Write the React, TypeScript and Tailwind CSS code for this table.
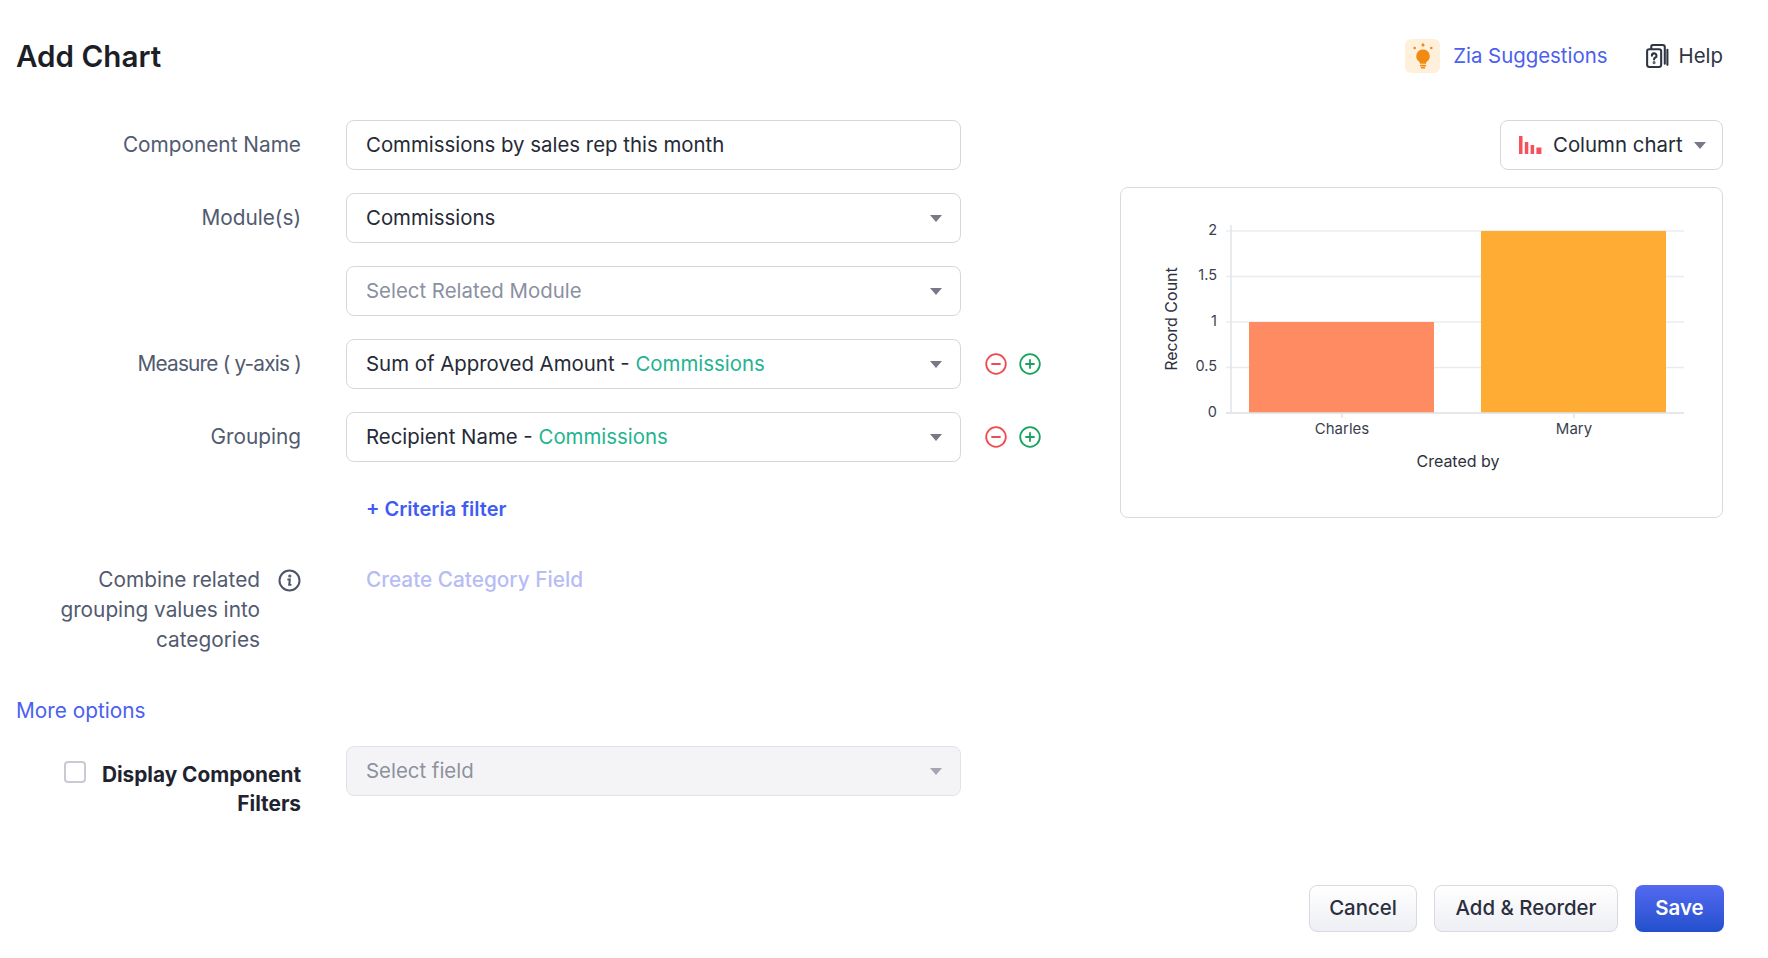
import React from "react";

const font = "font-['Inter','Noto_Sans',sans-serif]";
const labelCls = "w-[285px] shrink-0 text-right text-[20.8px] leading-[28px] text-[#525a70]";

function Caret({ color = "#777a86" }: { color?: string }) {
  return (
    <svg width="12" height="7" viewBox="0 0 12 7">
      <path d="M0 0h12L6 7z" fill={color} />
    </svg>
  );
}

function RoundAction({ kind }: { kind: "minus" | "plus" }) {
  const color = kind === "minus" ? "#f04b50" : "#17a45e";
  return (
    <svg width="22" height="22" viewBox="0 0 22 22" fill="none" stroke={color} strokeWidth="1.8" strokeLinecap="round">
      <circle cx="11" cy="11" r="9.8" />
      <path d="M7 11h8" />
      {kind === "plus" && <path d="M11 7v8" />}
    </svg>
  );
}

function Field({
  children,
  caret = true,
  disabled = false,
}: {
  children: React.ReactNode;
  caret?: boolean;
  disabled?: boolean;
}) {
  return (
    <div
      className={
        "ml-[45px] w-[615px] h-[50px] shrink-0 rounded-lg border flex items-center justify-between pl-[19px] pr-[18px] text-[20.4px] " +
        (disabled ? "bg-[#f4f4f7] border-[#e2e3ea]" : "bg-white border-[#d6d7de]")
      }
    >
      <span className="truncate">{children}</span>
      {caret && <Caret color={disabled ? "#a4a7b1" : "#777a86"} />}
    </div>
  );
}

function Row({ label, children }: { label?: React.ReactNode; children: React.ReactNode }) {
  return (
    <div className="flex items-center h-[50px]">
      <div className={labelCls}>{label}</div>
      {children}
    </div>
  );
}

function Actions() {
  return (
    <div className="flex items-center gap-[12px] ml-[24px]">
      <RoundAction kind="minus" />
      <RoundAction kind="plus" />
    </div>
  );
}

function ZiaIcon() {
  return (
    <div className="w-[35px] h-[34px] rounded-md bg-[#fff0dc] flex items-center justify-center">
      <svg width="24" height="26" viewBox="0 0 20 22">
        <circle cx="10" cy="1.6" r="1.3" fill="#f08a12" />
        <circle cx="3" cy="4.2" r="1.1" fill="#f08a12" />
        <circle cx="17" cy="4.2" r="1.1" fill="#f08a12" />
        <path d="M10 5.5a5.6 5.6 0 0 1 3.4 10.1c-.5.4-.8 1-.8 1.6v.3H7.4v-.3c0-.6-.3-1.2-.8-1.6A5.6 5.6 0 0 1 10 5.5z" fill="#f08a12" />
        <rect x="7.4" y="18.4" width="5.2" height="1.4" rx="0.5" fill="#f08a12" />
        <rect x="8.2" y="20.3" width="3.6" height="1.3" rx="0.5" fill="#f08a12" />
      </svg>
    </div>
  );
}

function HelpIcon() {
  return (
    <svg width="24" height="26" viewBox="0 0 23 25" fill="none" stroke="#303544" strokeWidth="2" strokeLinecap="round" strokeLinejoin="round">
      <path d="M6 5V3.5A1.5 1.5 0 0 1 7.5 2H17a2 2 0 0 1 2 2v16" />
      <path d="M21.5 6.5V21" />
      <rect x="2" y="6" width="13.5" height="17" rx="2" />
      <path d="M6.6 12.2a2.2 2.2 0 1 1 3 2c-.6.3-.9.7-.9 1.3v.4" />
      <circle cx="8.7" cy="19" r="0.4" fill="#303544" />
    </svg>
  );
}

function ColumnIcon() {
  return (
    <svg width="23" height="18" viewBox="0 0 23 18">
      <rect x="0" y="0" width="3.5" height="18" fill="#f4525b" />
      <rect x="5.8" y="6" width="3.5" height="12" fill="#f4525b" />
      <rect x="11.6" y="9" width="3.5" height="9" fill="#f4525b" />
      <rect x="17.4" y="11.5" width="5" height="6.5" fill="#f4525b" />
    </svg>
  );
}

function InfoIcon() {
  return (
    <svg width="23" height="23" viewBox="0 0 23 23" fill="none" stroke="#4c5468" strokeWidth="2" strokeLinecap="round">
      <circle cx="11.5" cy="11.5" r="10" />
      <circle cx="11.8" cy="7" r="0.6" fill="#4c5468" />
      <path d="M10.2 10.6h1.6l-.6 5.2h1.4" />
    </svg>
  );
}

function Chart() {
  const grid = [
    { v: "2", y: 43 },
    { v: "1.5", y: 88.5 },
    { v: "1", y: 134 },
    { v: "0.5", y: 179.5 },
    { v: "0", y: 225 },
  ];
  const ff = "Inter, sans-serif";
  return (
    <svg width="601" height="329" viewBox="0 0 601 329" className="block">
      {grid.map((g) => (
        <g key={g.v}>
          <line x1="105" x2="563" y1={g.y} y2={g.y} stroke="#ebecf0" strokeWidth="1.5" />
          <text x="96" y={g.y} textAnchor="end" dominantBaseline="middle" fontSize="14.5" fill="#3a3f4e" fontFamily={ff}>
            {g.v}
          </text>
        </g>
      ))}
      <line x1="110" x2="110" y1="37" y2="225" stroke="#e2e3e8" strokeWidth="1.5" />
      <rect x="128" y="134" width="185" height="91" fill="#ff8b62" />
      <rect x="360" y="43" width="185" height="182" fill="#ffac35" />
      <line x1="105" x2="563" y1="225" y2="225" stroke="#e2e3e8" strokeWidth="1.5" />
      <line x1="221" x2="221" y1="225" y2="230" stroke="#e2e3e8" strokeWidth="1.5" />
      <line x1="453" x2="453" y1="225" y2="230" stroke="#e2e3e8" strokeWidth="1.5" />
      <text x="221" y="242" textAnchor="middle" dominantBaseline="middle" fontSize="15" fill="#3a3f4e" fontFamily={ff}>
        Charles
      </text>
      <text x="453" y="242" textAnchor="middle" dominantBaseline="middle" fontSize="15" fill="#3a3f4e" fontFamily={ff}>
        Mary
      </text>
      <text x="337" y="275" textAnchor="middle" dominantBaseline="middle" fontSize="16" fill="#2e3240" fontFamily={ff}>
        Created by
      </text>
      <text
        x="52"
        y="131"
        textAnchor="middle"
        dominantBaseline="middle"
        fontSize="16"
        fill="#2e3240"
        fontFamily={ff}
        transform="rotate(-90 52 131)"
      >
        Record Count
      </text>
    </svg>
  );
}

export default function App() {
  return (
    <div className={`w-[1768px] h-[958px] bg-white flex flex-col ${font}`}>
      {/* Header */}
      <div className="flex items-center justify-between pl-[16px] pr-[45px] pt-[38px]">
        <h1 className="text-[29.6px] leading-[36px] font-semibold text-[#1d1f27]">Add Chart</h1>
        <div className="flex items-center">
          <ZiaIcon />
          <span className="ml-[13px] text-[20.4px] text-[#4b5ff0]">Zia Suggestions</span>
          <div className="ml-[37px]">
            <HelpIcon />
          </div>
          <span className="ml-[10px] text-[20.4px] text-[#303544]">Help</span>
        </div>
      </div>

      <div className="flex mt-[46px]">
        {/* Form */}
        <div className="w-[1120px] pl-[16px] flex flex-col">
          <div className="flex flex-col gap-[23px]">
            <Row label="Component Name">
              <Field caret={false}>
                <span className="text-[#262a36]">Commissions by sales rep this month</span>
              </Field>
            </Row>
            <Row label="Module(s)">
              <Field>
                <span className="text-[#262a36]">Commissions</span>
              </Field>
            </Row>
            <Row>
              <Field>
                <span className="text-[#8b90a0]">Select Related Module</span>
              </Field>
            </Row>
            <Row label={<span className="tracking-[-0.8px]">Measure ( y-axis )</span>}>
              <Field>
                <span className="text-[#262a36]">Sum of Approved Amount - </span>
                <span className="text-[#1fb48f]">Commissions</span>
              </Field>
              <Actions />
            </Row>
            <Row label="Grouping">
              <Field>
                <span className="text-[#262a36]">Recipient Name - </span>
                <span className="text-[#1fb48f]">Commissions</span>
              </Field>
              <Actions />
            </Row>
          </div>

          <div className="mt-[35px] pl-[350px] text-[20px] leading-[24px] font-semibold text-[#3f5cf2]">+ Criteria filter</div>

          <div className="mt-[44px] flex items-start">
            <div className="w-[285px] shrink-0 flex items-start justify-end">
              <div className="text-right text-[20.8px] leading-[30px] text-[#525a70] w-[240px]">
                Combine related grouping values into categories
              </div>
              <div className="ml-[18px] mt-[4px]">
                <InfoIcon />
              </div>
            </div>
            <div className="ml-[65px] text-[20.8px] leading-[30px] font-medium text-[#b7bcf5]">Create Category Field</div>
          </div>

          <div className="mt-[44px] text-[20.8px] leading-[24px] text-[#4b5ff0]">More options</div>

          <div className="mt-[23px] flex items-start">
            <div className="w-[285px] shrink-0 flex items-start pt-[14px] pl-[48px]">
              <div className="w-[22px] h-[22px] shrink-0 rounded-[4px] border-2 border-[#c9cad3] mt-[1px]" />
              <div className="flex-1 text-right text-[20.8px] leading-[29px] font-bold text-[#1f2330]">
                Display Component Filters
              </div>
            </div>
            <Field disabled>
              <span className="text-[#8d919c]">Select field</span>
            </Field>
          </div>
        </div>

        {/* Preview */}
        <div className="w-[603px] flex flex-col items-end">
          <div className="w-[223px] h-[50px] rounded-lg border border-[#d6d7de] flex items-center pl-[18px] pr-[16px]">
            <ColumnIcon />
            <span className="ml-[11px] text-[20.4px] text-[#262a36]">Column chart</span>
            <span className="ml-auto">
              <Caret />
            </span>
          </div>
          <div className="mt-[17px] w-full h-[331px] rounded-lg border border-[#d9dae0]">
            <Chart />
          </div>
        </div>
      </div>

      {/* Footer */}
      <div className="mt-auto flex justify-end gap-[17px] pr-[44px] pb-[26px]">
        <button className="w-[108px] h-[47px] rounded-lg border border-[#d8d9e2] bg-gradient-to-b from-white to-[#eeeff4] text-[20.4px] font-medium text-[#2b2f3e]">
          Cancel
        </button>
        <button className="w-[184px] h-[47px] rounded-lg border border-[#d8d9e2] bg-gradient-to-b from-white to-[#eeeff4] text-[20.4px] font-medium text-[#2b2f3e]">
          Add &amp; Reorder
        </button>
        <button className="w-[89px] h-[47px] rounded-lg bg-gradient-to-b from-[#5369f2] to-[#2150cc] text-[20.4px] font-semibold text-white">
          Save
        </button>
      </div>
    </div>
  );
}
